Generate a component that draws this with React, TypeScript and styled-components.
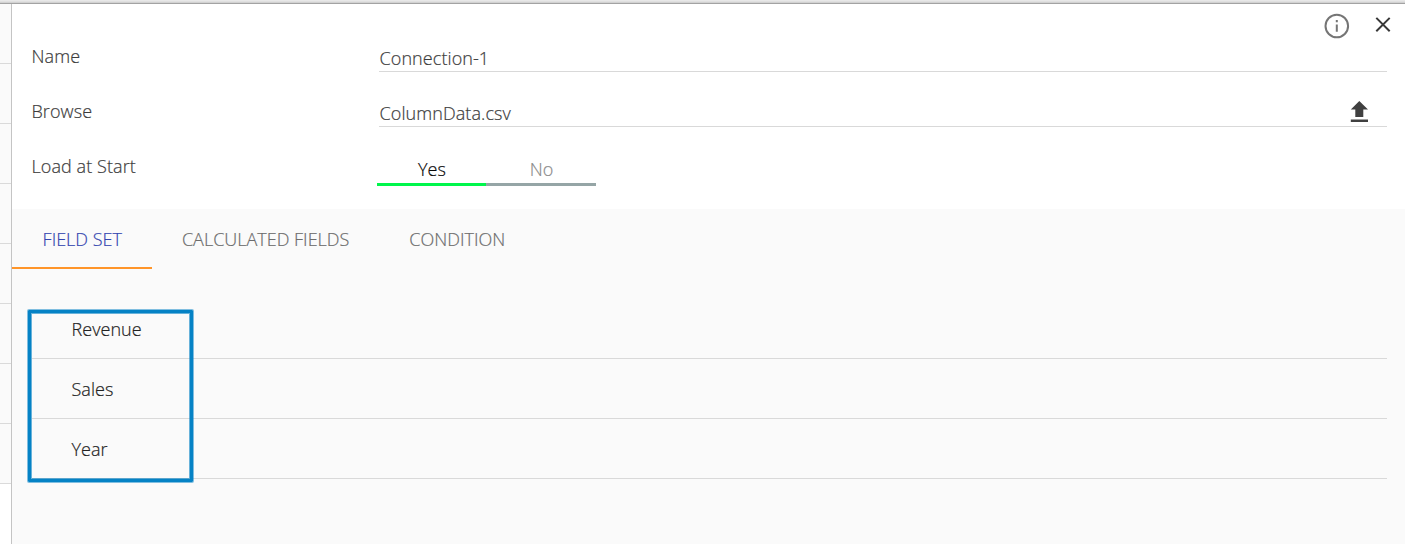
import React from "react";
import styled, { createGlobalStyle } from "styled-components";

const GlobalStyle = createGlobalStyle`
  * { box-sizing: border-box; }
  body { margin: 0; background: #fff; overflow: hidden; }
`;

const Page = styled.div`
  display: flex;
  flex-direction: column;
  height: 544px;
  font-family: "Open Sans", "Noto Sans", sans-serif;
  font-size: 18px;
  font-weight: 300;
  line-height: 24px;
  color: #333;
  -webkit-text-stroke: 0.2px currentColor;
`;

const TopEdge = styled.div`
  flex: none;
  height: 4px;
  background: linear-gradient(#e8e8e8 0 1px, #e0e0e0 1px 2px, #d2d2d2 2px);
  border-bottom: 1px solid #a3a3a3;
`;

const Body = styled.div`
  flex: 1;
  display: flex;
  min-height: 0;
`;

const Strip = styled.div`
  flex: none;
  width: 12px;
  border-right: 1px solid #c4c4c4;
`;

const StripRow = styled.div`
  height: 60px;
  background: #fafafa;
  border-bottom: 1px solid #dadada;
`;

const Panel = styled.main`
  flex: 1;
  display: flex;
  flex-direction: column;
  position: relative;
`;

const Form = styled.section`
  flex: none;
  height: 205px;
  padding: 26px 18px 0 19.5px;
  letter-spacing: 0.08px;
`;

const FormRow = styled.div`
  display: flex;
  align-items: flex-start;
  height: 55px;
`;

const Label = styled.label`
  width: 347.5px;
  padding-top: 14px;
  color: #3c3c3c;
`;

const Field = styled.div`
  flex: 1;
  display: flex;
  justify-content: space-between;
  height: 42px;
  padding: 16px 18px 0 0.5px;
  border-bottom: 1px solid #d9d9d9;
  color: #3c3c3c;
`;

const UploadIcon = styled.svg`
  display: block;
`;

const Toggle = styled.div`
  display: flex;
  margin: 18px 0 0 -2px;
`;

const Option = styled.div<{ $on?: boolean }>`
  width: ${(p) => (p.$on ? 109 : 110)}px;
  height: 28px;
  padding-left: 1px;
  line-height: 22px;
  text-align: center;
  color: ${(p) => (p.$on ? "#0a0a0a" : "#8a8a8a")};
  border-bottom: 3px solid ${(p) => (p.$on ? "#00f64b" : "#95a5a6")};
`;

const Actions = styled.div`
  position: absolute;
  top: 8px;
  right: 13px;
  display: flex;
  gap: 23px;
`;

const Content = styled.section`
  flex: 1;
  background: #fafafa;
`;

const Tabs = styled.nav`
  display: flex;
  height: 60px;
`;

const Tab = styled.div<{ $active?: boolean }>`
  padding: 18px 30px 0 ${(p) => (p.$active ? 30.6 : 30)}px;
  white-space: nowrap;
  color: ${(p) => (p.$active ? "#3446b0" : "#6c6c6c")};
  border-bottom: 2px solid ${(p) => (p.$active ? "#ff9529" : "transparent")};
`;

const List = styled.div`
  position: relative;
  margin: 30px 18px 0 20px;
`;

const Item = styled.div`
  height: 60px;
  padding: 18px 0 0 39.5px;
  color: #222;
  letter-spacing: 0.05px;
  border-bottom: 1px solid #d9d9d9;
`;

const Highlight = styled.div`
  position: absolute;
  left: -4px;
  top: 11px;
  width: 165px;
  height: 172px;
  border: 3px solid #0582c5;
  border-radius: 1px;
  box-shadow: 0 0 0 1px rgba(5, 130, 197, 0.5), inset 0 0 0 1px rgba(5, 130, 197, 0.6);
`;

const items = ["Revenue", "Sales", "Year"];

export default function App() {
  return (
    <Page>
      <GlobalStyle />
      <TopEdge />
      <Body>
        <Strip>
          {Array.from({ length: 8 }, (_, i) => (
            <StripRow key={i} />
          ))}
        </Strip>
        <Panel>
          <Form>
            <FormRow>
              <Label>Name</Label>
              <Field>Connection-1</Field>
            </FormRow>
            <FormRow>
              <Label>Browse</Label>
              <Field>
                ColumnData.csv
                <UploadIcon width="19" height="22" viewBox="0 0 19 22" fill="#404040">
                  <path d="M9.3 0L18 8.6H13.3V16H5.3V8.6H0.8Z" />
                  <path d="M0.8 18.5H18V21H0.8Z" />
                </UploadIcon>
              </Field>
            </FormRow>
            <FormRow>
              <Label>Load at Start</Label>
              <Toggle>
                <Option $on>Yes</Option>
                <Option>No</Option>
              </Toggle>
            </FormRow>
          </Form>
          <Actions>
            <svg width="28" height="28" viewBox="0 0 28 28" fill="none" stroke="#757575" strokeWidth="2">
              <circle cx="13.8" cy="14" r="11.3" />
              <path d="M13.8 12.5V19.8M13.8 8V10.2" />
            </svg>
            <svg width="18" height="28" viewBox="0 0 18 28" fill="none" stroke="#383838" strokeWidth="2">
              <path d="M2.3 5.9L15.7 19.3M15.7 5.9L2.3 19.3" />
            </svg>
          </Actions>
          <Content>
            <Tabs>
              <Tab $active>FIELD SET</Tab>
              <Tab>CALCULATED FIELDS</Tab>
              <Tab>CONDITION</Tab>
            </Tabs>
            <List>
              {items.map((name) => (
                <Item key={name}>{name}</Item>
              ))}
              <Highlight />
            </List>
          </Content>
        </Panel>
      </Body>
    </Page>
  );
}
